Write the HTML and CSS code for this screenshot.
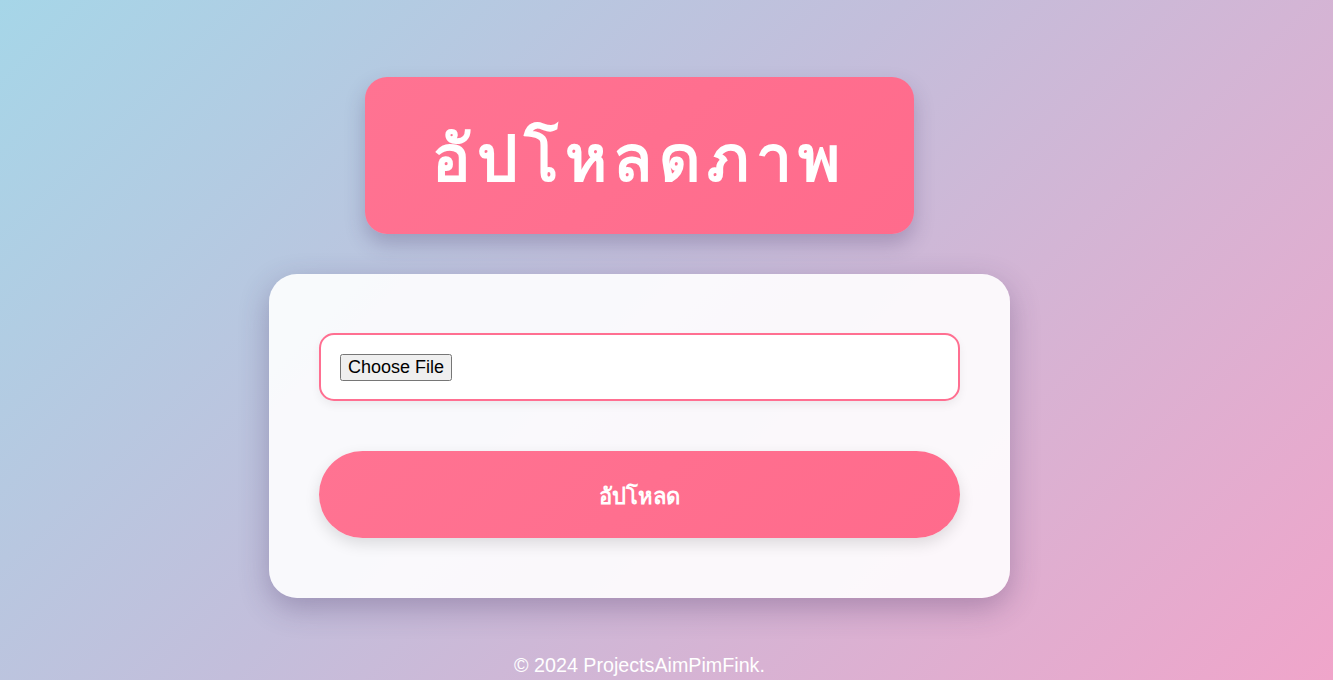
FILE: index.html
```html
<!DOCTYPE html>
<html lang="th">
<head>
<meta charset="utf-8">
<title>อัปโหลดภาพ</title>
<link rel="stylesheet" href="styles.css">
</head>
<body>
<div class="page">
  <h1 class="title">อัปโหลดภาพ</h1>
  <form class="card">
    <input class="file" type="file" name="image">
    <button class="upload" type="button">อัปโหลด</button>
  </form>
  <footer class="footer">© 2024 ProjectsAimPimFink.</footer>
</div>
</body>
</html>
```

FILE: styles.css
```css
html, body {
  margin: 0;
  padding: 0;
}
body {
  min-height: 100vh;
  background: linear-gradient(135deg, #a6d6e8 0%, #c3bedb 45%, #f0a5ca 100%);
  background-attachment: fixed;
  font-family: "Liberation Sans", Arial, "Noto Sans", sans-serif;
}
.page {
  width: 1279px;
  display: flex;
  flex-direction: column;
  align-items: center;
  padding-top: 77px;
}
.title {
  margin: 0;
  width: 549px;
  height: 157px;
  box-sizing: border-box;
  padding-top: 4px;
  display: flex;
  align-items: center;
  justify-content: center;
  background: linear-gradient(135deg, #ff7392, #ff6b8c);
  border-radius: 22px;
  color: #fff;
  font-size: 64px;
  font-weight: bold;
  letter-spacing: 6.5px;
  box-shadow: 0 10px 20px rgba(60, 40, 90, 0.25);
}
.card {
  margin-top: 40px;
  width: 741px;
  box-sizing: border-box;
  padding: 59px 50px 60px;
  background: rgba(255, 255, 255, 0.9);
  border-radius: 28px;
  box-shadow: 0 10px 30px rgba(60, 40, 90, 0.3);
  display: flex;
  flex-direction: column;
  gap: 50px;
}
.file {
  box-sizing: border-box;
  height: 68px;
  width: 100%;
  padding: 19px 19px;
  border: 2px solid #ff6f91;
  border-radius: 15px;
  background: #fff;
  color: transparent;
  font-family: "Liberation Sans", Arial, sans-serif;
  font-size: 18px;
  box-shadow: 0 4px 10px rgba(0, 0, 0, 0.06);
}
.file::file-selector-button {
  color: #000;
  font-family: "Liberation Sans", Arial, sans-serif;
  font-size: 18px;
}
.upload {
  height: 87px;
  width: 100%;
  padding-top: 5px;
  border: none;
  border-radius: 44px;
  background: linear-gradient(135deg, #ff7392, #ff6b8c);
  color: #fff;
  font-size: 22px;
  font-weight: bold;
  box-shadow: 0 6px 15px rgba(0, 0, 0, 0.12);
  font-family: "Liberation Sans", Arial, sans-serif;
}
.footer {
  margin-top: 56px;
  color: #fff;
  font-size: 19.7px;
}
```
